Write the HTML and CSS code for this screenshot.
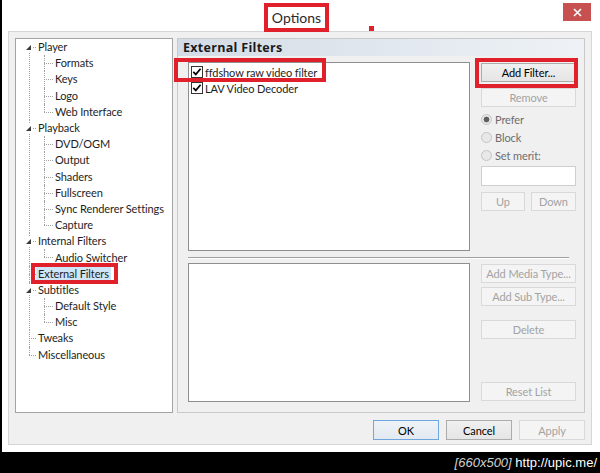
FILE: index.html
```html
<!DOCTYPE html>
<html lang="en">
  <head>
    <meta charset="UTF-8" />
    <meta name="viewport" content="width=device-width, initial-scale=1.0" />
    <title>Options</title>
    <link rel="stylesheet" href="styles.css">
  </head>
  <body>
    <div class="window">
      <div class="titlebar">
        <span class="title">Options</span>
        <span class="marker"></span>
        <button class="close" title="Close">
          <svg width="9" height="9" viewBox="0 0 9 9"><path d="M1 1 L8 8 M8 1 L1 8" stroke="#fff" stroke-width="1.6" fill="none"/></svg>
        </button>
      </div>
      <div class="client">
        <div class="main">
          <ul class="tree">
            <li class="root">
              <div class="row"><span class="twist"></span><span class="label">Player</span></div>
              <ul>
                <li><div class="row"><span class="label">Formats</span></div></li>
                <li><div class="row"><span class="label">Keys</span></div></li>
                <li><div class="row"><span class="label">Logo</span></div></li>
                <li><div class="row"><span class="label">Web Interface</span></div></li>
              </ul>
            </li>
            <li class="root">
              <div class="row"><span class="twist"></span><span class="label">Playback</span></div>
              <ul>
                <li><div class="row"><span class="label">DVD/OGM</span></div></li>
                <li><div class="row"><span class="label">Output</span></div></li>
                <li><div class="row"><span class="label">Shaders</span></div></li>
                <li><div class="row"><span class="label">Fullscreen</span></div></li>
                <li><div class="row"><span class="label">Sync Renderer Settings</span></div></li>
                <li><div class="row"><span class="label">Capture</span></div></li>
              </ul>
            </li>
            <li class="root">
              <div class="row"><span class="twist"></span><span class="label">Internal Filters</span></div>
              <ul>
                <li><div class="row"><span class="label">Audio Switcher</span></div></li>
              </ul>
            </li>
            <li class="root">
              <div class="row"><span class="label selected">External Filters</span></div>
            </li>
            <li class="root">
              <div class="row"><span class="twist"></span><span class="label">Subtitles</span></div>
              <ul>
                <li><div class="row"><span class="label">Default Style</span></div></li>
                <li><div class="row"><span class="label">Misc</span></div></li>
              </ul>
            </li>
            <li class="root">
              <div class="row"><span class="label">Tweaks</span></div>
            </li>
            <li class="root">
              <div class="row"><span class="label">Miscellaneous</span></div>
            </li>
          </ul>

          <div class="page">
            <div class="page-title">External Filters</div>
            <div class="page-body">
              <div class="section upper">
                <div class="listbox">
                  <label class="check marked">
                    <svg class="box" width="12" height="12" viewBox="0 0 12 12"><rect x="0.5" y="0.5" width="11" height="11" fill="#fff" stroke="#333"/><path d="M2.3 5.8 L4.8 8.4 L9.6 2.8" fill="none" stroke="#000" stroke-width="1.7"/></svg>
                    ffdshow raw video filter
                  </label>
                  <label class="check">
                    <svg class="box" width="12" height="12" viewBox="0 0 12 12"><rect x="0.5" y="0.5" width="11" height="11" fill="#fff" stroke="#333"/><path d="M2.3 5.8 L4.8 8.4 L9.6 2.8" fill="none" stroke="#000" stroke-width="1.7"/></svg>
                    LAV Video Decoder
                  </label>
                </div>
                <div class="side">
                  <button class="btn add-filter">Add Filter...</button>
                  <button class="btn remove" disabled>Remove</button>
                  <div class="radio first checked">Prefer</div>
                  <div class="radio">Block</div>
                  <div class="radio">Set merit:</div>
                  <input class="merit" type="text" disabled>
                  <div class="pair">
                    <button class="btn up" disabled>Up</button>
                    <button class="btn down" disabled>Down</button>
                  </div>
                </div>
              </div>
              <hr class="sep">
              <div class="section lower">
                <div class="listbox"></div>
                <div class="side">
                  <button class="btn" disabled>Add Media Type...</button>
                  <button class="btn sub-type" disabled>Add Sub Type...</button>
                  <button class="btn delete" disabled>Delete</button>
                  <button class="btn reset" disabled>Reset List</button>
                </div>
              </div>
            </div>
          </div>
        </div>

        <div class="footer">
          <button class="btn default">OK</button>
          <button class="btn">Cancel</button>
          <button class="btn" disabled>Apply</button>
        </div>
      </div>
    </div>
    <div class="watermark"><span class="size">[660x500]</span>&nbsp;<span class="url">http://upic.me/</span></div>
  </body>
</html>
```

FILE: styles.css
```css
body {
  margin: 0;
  width: 600px;
  height: 473px;
  overflow: hidden;
  background: #000;
  font-family: Lato, "Open Sans", sans-serif;
  font-size: 11px;
  letter-spacing: -0.1px;
  color: #1e1e1e;
}
.window {
  margin-left: 2px;
  width: 598px;
  height: 452px;
  box-sizing: border-box;
  padding: 0 8px 7px 6px;
  background: #fff;
  display: flex;
  flex-direction: column;
}

/* title bar */
.titlebar {
  height: 31px;
  flex: none;
  display: grid;
  grid-template-columns: 1fr auto 1fr;
  align-items: start;
  position: relative;
  z-index: 1;
}
.title {
  grid-column: 2;
  margin-top: 3px;
  margin-right: 7px;
  height: 29px;
  box-sizing: border-box;
  padding: 0 4px;
  border: 4px solid #e0202a;
  font-size: 14px;
  letter-spacing: 0;
  line-height: 21px;
  color: #2a2a2a;
}
.marker {
  position: absolute;
  left: 361px;
  top: 26px;
  width: 5px;
  height: 5px;
  background: #e0202a;
}
.close {
  grid-column: 3;
  justify-self: end;
  margin: 3px 1px 0 0;
  width: 28px;
  height: 18px;
  padding: 0;
  border: 0;
  background: #c75050;
  display: flex;
  align-items: center;
  justify-content: center;
}

/* client area */
.client {
  flex: 1;
  border: 1px solid #d6d6d6;
  background: #f0f0f0;
  padding: 6px 6px 4px;
  display: flex;
  flex-direction: column;
}
.main {
  display: flex;
  gap: 4px;
  height: 375px;
}

/* tree */
.tree {
  width: 158px;
  height: 375px;
  box-sizing: border-box;
  margin: 0;
  padding: 0;
  list-style: none;
  border: 1px solid #a3a3a3;
  background: #fff;
}
.tree ul {
  margin: 0;
  padding: 0;
  list-style: none;
}
.tree li {
  position: relative;
}
.tree li::before {
  content: "";
  position: absolute;
  top: 0;
  bottom: 0;
  border-left: 1px dotted #a0a0a0;
}
.tree .root::before {
  left: 13px;
}
.tree .root:first-child::before {
  top: 8px;
}
.tree .root:last-child::before,
.tree ul li:last-child::before {
  bottom: auto;
  height: 8px;
}
.tree ul li::before {
  left: 28px;
}
.row {
  position: relative;
  height: 16.2px;
  display: flex;
  align-items: center;
  padding-left: 20px;
}
.row::before {
  content: "";
  position: absolute;
  top: 8px;
  left: 13px;
  width: 7px;
  border-top: 1px dotted #a0a0a0;
}
.tree ul .row {
  padding-left: 37px;
}
.tree ul .row::before {
  left: 28px;
  width: 9px;
}
.twist {
  position: absolute;
  left: 9px;
  top: 3px;
  width: 8px;
  height: 10px;
  background: #fff;
  z-index: 1;
}
.twist::before {
  content: "";
  position: absolute;
  left: 1px;
  top: 3px;
  border-left: 5px solid transparent;
  border-bottom: 5px solid #3a3a3a;
}
.label {
  padding: 0 2px;
  line-height: 14px;
  white-space: nowrap;
  position: relative;
}
.label.selected {
  background: #cfe6f8;
}
.label.selected::after {
  content: "";
  position: absolute;
  left: -5px;
  right: -7px;
  top: -4px;
  bottom: -3px;
  border: 4px solid #e0202a;
}

/* property page */
.page {
  width: 408px;
  box-sizing: border-box;
  border: 1px solid #c9c9c9;
  display: flex;
  flex-direction: column;
}
.page-title {
  height: 17px;
  line-height: 17px;
  padding-left: 5px;
  font-family: "Open Sans", sans-serif;
  font-size: 12.5px;
  font-weight: bold;
  letter-spacing: 0.3px;
  color: #1a1a1a;
  background: linear-gradient(to right, #d3dce6, #eef2f6);
}
.page-body {
  flex: 1;
  padding: 6px 8px 10px 10px;
  display: flex;
  flex-direction: column;
}
.section {
  display: flex;
  gap: 11px;
}
.listbox {
  width: 282px;
  box-sizing: border-box;
  border: 1px solid #8f8f8f;
  background: #fff;
  padding-top: 1px;
}
.upper .listbox {
  height: 189px;
}
.lower .listbox {
  height: 139px;
}
.sep {
  width: 381px;
  height: 0;
  margin: 6px 0 4px;
  border: 0;
  border-top: 1px solid #a0a0a0;
  border-bottom: 1px solid #fff;
}
.check {
  position: relative;
  display: flex;
  width: fit-content;
  align-items: center;
  gap: 2px;
  height: 16px;
  padding-left: 2px;
  white-space: nowrap;
}
.check.marked::after {
  content: "";
  position: absolute;
  left: -15px;
  right: -9px;
  top: -6px;
  height: 24px;
  box-sizing: border-box;
  border: 4px solid #e0202a;
}
.side {
  width: 95px;
  display: flex;
  flex-direction: column;
}

/* buttons */
.btn {
  height: 19px;
  padding: 0;
  font-family: inherit;
  font-size: 11px;
  letter-spacing: -0.1px;
  white-space: nowrap;
  color: #000;
  border: 1px solid #acacac;
  background: linear-gradient(#f0f0f0, #e5e5e5);
}
.btn:disabled {
  color: #a3a3a3;
  border-color: #d9d9d9;
  background: #f4f4f4;
}
.side .btn {
  margin-top: 1px;
}
.add-filter {
  position: relative;
}
.add-filter::after {
  content: "";
  position: absolute;
  left: -7px;
  right: -3px;
  top: -6px;
  bottom: -7px;
  border: 4px solid #e0202a;
}
.side .remove {
  margin-top: 6px;
}
.radio {
  display: flex;
  align-items: center;
  height: 18px;
  color: #6d6d6d;
}
.radio.first {
  margin-top: 3px;
}
.radio::before {
  content: "";
  width: 11px;
  height: 11px;
  margin-right: 3px;
  box-sizing: border-box;
  border: 1px solid #c4c4c4;
  border-radius: 50%;
  background: #e8e8e8;
}
.radio.checked::before {
  background: radial-gradient(circle, #5f5f5f 0 2.6px, #e8e8e8 3.2px);
}
.merit {
  margin: 2px 0 0;
  height: 20px;
  box-sizing: border-box;
  border: 1px solid #cfcfcf;
  background: #fff;
}
.pair {
  display: flex;
  gap: 6px;
  margin-top: 6px;
}
.pair .btn {
  margin: 0;
}
.up {
  width: 44px;
}
.down {
  width: 45px;
}
.side .sub-type {
  margin-top: 4px;
}
.side .delete {
  margin-top: 14px;
}
.side .reset {
  margin-top: auto;
  margin-bottom: 1px;
}

/* dialog buttons */
.footer {
  display: flex;
  justify-content: flex-end;
  gap: 7px;
  margin-top: 7px;
}
.footer .btn {
  width: 66px;
  height: 20px;
}
.footer .default {
  border-color: #6fa6de;
  background: linear-gradient(#eef3f8, #e3e9f0);
}

/* screenshot watermark */
.watermark {
  height: 21px;
  display: flex;
  justify-content: flex-end;
  align-items: center;
  padding-right: 3px;
  font-family: "Liberation Sans", sans-serif;
  font-size: 13px;
  letter-spacing: 0;
}
.size {
  color: #d0d0d0;
  font-style: italic;
}
.url {
  color: #fff;
}
```
